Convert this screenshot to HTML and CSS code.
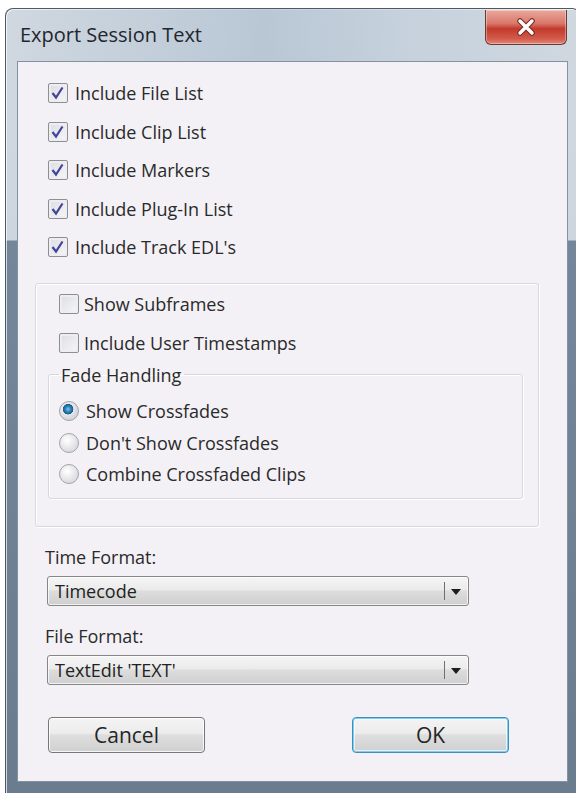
FILE: index.html
```html
<!DOCTYPE html>
<html lang="en">
  <head>
    <meta charset="UTF-8" />
    <title>Export Session Text</title>
    <link rel="stylesheet" href="styles.css">
  </head>
  <body>
    <div class="window">
      <div class="titlebar">
        <span class="title">Export Session Text</span>
        <button type="button" class="close-btn">
          <svg width="20" height="18" viewBox="0 0 20 18">
            <path d="M4 3 L16 15 M16 3 L4 15" stroke="#7a2a22" stroke-width="5.5" stroke-linecap="round" />
            <path d="M4 3 L16 15 M16 3 L4 15" stroke="#ffffff" stroke-width="3.4" stroke-linecap="round" />
          </svg>
        </button>
      </div>

      <div class="client">
        <!-- Main options -->
        <ul class="check-list">
          <li class="check-row"><span class="box checked"></span>Include File List</li>
          <li class="check-row"><span class="box checked"></span>Include Clip List</li>
          <li class="check-row"><span class="box checked"></span>Include Markers</li>
          <li class="check-row"><span class="box checked"></span>Include Plug-In List</li>
          <li class="check-row"><span class="box checked"></span>Include Track EDL's</li>
        </ul>

        <div class="group">
          <div class="group-row"><span class="box"></span>Show Subframes</div>
          <div class="group-row"><span class="box"></span>Include User Timestamps</div>

          <fieldset class="fade-group">
            <legend>Fade Handling</legend>
            <div class="radio-row"><span class="radio selected"></span>Show Crossfades</div>
            <div class="radio-row"><span class="radio"></span>Don't Show Crossfades</div>
            <div class="radio-row"><span class="radio"></span>Combine Crossfaded Clips</div>
          </fieldset>
        </div>

        <div class="field time-field">
          <div class="field-label">Time Format:</div>
          <div class="select">
            <span class="select-value">Timecode</span>
            <span class="select-sep"></span>
            <span class="select-arrow"></span>
          </div>
        </div>

        <div class="field file-field">
          <div class="field-label">File Format:</div>
          <div class="select">
            <span class="select-value">TextEdit 'TEXT'</span>
            <span class="select-sep"></span>
            <span class="select-arrow"></span>
          </div>
        </div>

        <div class="button-row">
          <button type="button" class="dlg-btn">Cancel</button>
          <button type="button" class="dlg-btn default">OK</button>
        </div>
      </div>
    </div>
  </body>
</html>
```

FILE: styles.css
```css
* {
  margin: 0;
  padding: 0;
  box-sizing: border-box;
}

body {
  font-family: "Open Sans", "Noto Sans", sans-serif;
  background: #ffffff;
  color: #2a2a2a;
  padding: 8px 0 0 5px;
  overflow: hidden;
}

/* Window frame */
.window {
  width: 575px;
  height: 785px;
  border: 1px solid #4f5963;
  border-bottom: none;
  border-radius: 8px 8px 0 0;
  background: linear-gradient(to bottom, #d0d8e0 0, #cdd6df 231px, #74879a 232px, #6a7d8f 100%);
  box-shadow: inset 1px 1px 0 rgba(255, 255, 255, 0.7);
  display: flex;
  flex-direction: column;
}

.titlebar {
  height: 52px;
  display: flex;
  align-items: flex-start;
  justify-content: space-between;
  padding: 0 12px 0 14px;
  background: linear-gradient(to right, rgba(214, 220, 226, 0) 0, rgba(170, 188, 206, 0.6) 45%, rgba(186, 201, 216, 0.45) 70%, rgba(214, 220, 226, 0) 100%);
  border-radius: 8px 8px 0 0;
}

.title {
  font-size: 20px;
  line-height: 24px;
  margin-top: 14px;
  color: #1f262d;
}

.close-btn {
  width: 82px;
  height: 35px;
  margin-top: 1px;
  border: 1px solid #6b3a36;
  border-top: none;
  border-radius: 0 0 6px 6px;
  background: linear-gradient(to bottom, #e9a99c 0, #d9776a 40%, #c23b2b 55%, #d35b4b 85%, #e38b7b 100%);
  box-shadow: inset 0 0 0 1px rgba(255, 255, 255, 0.35);
  display: flex;
  align-items: center;
  justify-content: center;
}

/* Client area */
.client {
  flex: 1;
  margin: 0 11px 11px 11px;
  background: #f3f1f5;
  border: 1px solid #8491a0;
  display: flex;
  flex-direction: column;
}

.check-list {
  list-style: none;
  padding: 12px 0 0 30px;
}

.check-row,
.group-row,
.radio-row {
  display: flex;
  align-items: center;
  font-size: 18px;
  white-space: nowrap;
}

.check-row {
  height: 38.5px;
  gap: 7px;
}

.box {
  width: 20px;
  height: 20px;
  border: 1px solid #8e8f95;
  border-radius: 2px;
  background: linear-gradient(135deg, #dcdde2, #f7f7f9);
  box-shadow: inset 0 0 0 2px #eeeef2;
  flex-shrink: 0;
}

.box.checked {
  background-image:
    url("data:image/svg+xml;utf8,<svg xmlns='http://www.w3.org/2000/svg' width='20' height='20'><path d='M4.5 10 L8 14.5 L14.5 4.5' fill='none' stroke='%2343449a' stroke-width='2.2'/></svg>"),
    linear-gradient(135deg, #dcdde2, #f7f7f9);
  background-position: -1px -1px, 0 0;
}

/* Options group */
.group {
  margin: 16px 0 0 17px;
  width: 504px;
  height: 244px;
  border: 1px solid #d7d7dc;
  border-radius: 3px;
  box-shadow: inset 1px 1px 0 #ffffff, 1px 1px 0 #ffffff;
  padding-top: 1px;
}

.group-row {
  height: 39px;
  padding-left: 23px;
  gap: 5px;
}

.fade-group {
  margin: 0 15px 0 12px;
  border: 1px solid #d7d7dc;
  border-radius: 3px;
  box-shadow: inset 1px 1px 0 #ffffff, 1px 1px 0 #ffffff;
  padding: 9px 0 8px 10px;
}

.fade-group legend {
  font-size: 18px;
  line-height: 24px;
  margin-left: 0;
  padding: 0 3px 0 2px;
}

.radio-row {
  height: 31.5px;
  gap: 7px;
}

.radio {
  width: 20px;
  height: 20px;
  border-radius: 50%;
  border: 1px solid #a2a3a8;
  background: radial-gradient(circle at 40% 35%, #ffffff, #dcdde2 70%);
  flex-shrink: 0;
}

.radio.selected {
  background:
    radial-gradient(circle at 45% 40%, #7fc3e8 0, #2a7fb3 3px, #1b5b8a 5px, rgba(0, 0, 0, 0) 5.5px),
    radial-gradient(circle at 40% 35%, #ffffff, #d3d5dc 70%);
}

/* Format selects */
.field {
  margin-left: 27px;
}

.time-field {
  margin-top: 18px;
}

.file-field {
  margin-top: 18px;
}

.field-label {
  font-size: 18px;
  line-height: 24px;
  margin-bottom: 7px;
}

.select {
  width: 422px;
  height: 30px;
  margin-left: 2px;
  border: 1px solid #868686;
  border-radius: 3px;
  background: linear-gradient(to bottom, #f5f5f5 0, #ebebeb 45%, #dddddd 50%, #cfcfcf 100%);
  box-shadow: inset 0 0 0 1px rgba(255, 255, 255, 0.7);
  display: flex;
  align-items: center;
  padding-left: 7px;
}

.select-value {
  flex: 1;
  font-size: 18px;
  color: #222;
}

.select-sep {
  width: 1px;
  height: 18px;
  background: #6f6f6f;
}

.select-arrow {
  width: 0;
  height: 0;
  margin: 2px 7px 0 6px;
  border-left: 5.5px solid transparent;
  border-right: 5.5px solid transparent;
  border-top: 6px solid #1d1d1d;
}

/* Buttons */
.button-row {
  display: flex;
  justify-content: space-between;
  margin: 32px 0 0 30px;
  width: 461px;
}

.dlg-btn {
  width: 157px;
  height: 36px;
  font-family: "Open Sans", "Noto Sans", sans-serif;
  font-size: 21px;
  color: #252525;
  border: 1px solid #777777;
  border-radius: 4px;
  background: linear-gradient(to bottom, #f4f4f4 0, #ececec 45%, #dedede 50%, #d0d0d0 100%);
  box-shadow: inset 0 0 0 1px rgba(255, 255, 255, 0.8);
}

.dlg-btn.default {
  border-color: #3b8fc0;
  box-shadow: inset 0 0 0 1px #7fd0f0, inset 0 0 0 2px rgba(255, 255, 255, 0.6);
}
```
